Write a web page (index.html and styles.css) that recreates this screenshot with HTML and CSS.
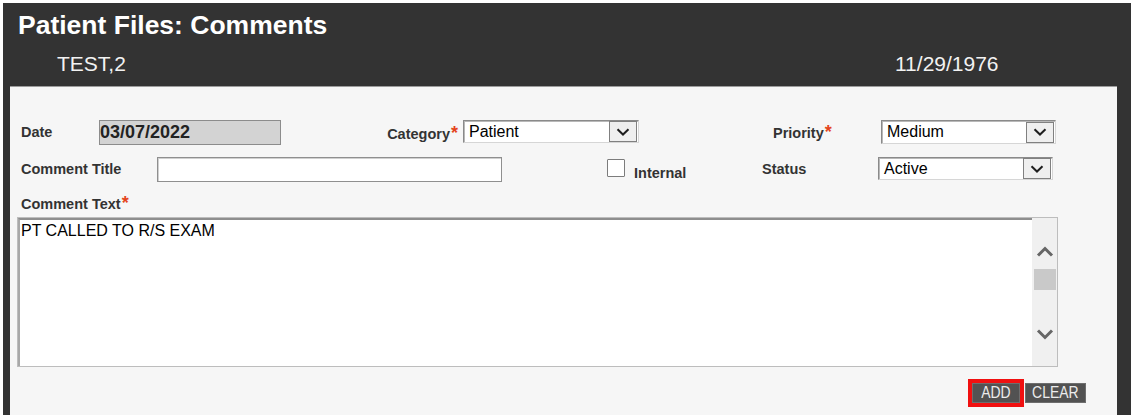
FILE: index.html
```html
<!DOCTYPE html>
<html>
<head>
<meta charset="utf-8">
<title>Patient Files: Comments</title>
<link rel="stylesheet" href="styles.css">
</head>
<body>
<div class="frame">
  <h1 class="title">Patient Files: Comments</h1>
  <div class="patient">
    <span class="patient-name">TEST,2</span>
    <span class="patient-dob">11/29/1976</span>
  </div>
  <div class="panel">
    <div class="row row-1">
      <label class="lbl lbl-date">Date</label>
      <div class="date-box">03/07/2022</div>
      <div class="lbl lbl-cat">Category<span class="req">*</span></div>
      <div class="select sel-cat">
        <span class="sel-value">Patient</span>
        <span class="sel-arrow"><svg width="14" height="8" viewBox="0 0 14 8"><path d="M1.5 1.2 L7 6.5 L12.5 1.2" fill="none" stroke="#1e1e1e" stroke-width="2"/></svg></span>
      </div>
      <div class="lbl lbl-pri">Priority<span class="req">*</span></div>
      <div class="select sel-pri">
        <span class="sel-value">Medium</span>
        <span class="sel-arrow"><svg width="14" height="8" viewBox="0 0 14 8"><path d="M1.5 1.2 L7 6.5 L12.5 1.2" fill="none" stroke="#1e1e1e" stroke-width="2"/></svg></span>
      </div>
    </div>
    <div class="row row-2">
      <label class="lbl lbl-title">Comment Title</label>
      <div class="text-input"></div>
      <div class="check-cell">
        <span class="checkbox"></span>
        <span class="lbl lbl-internal">Internal</span>
      </div>
      <div class="lbl lbl-status">Status</div>
      <div class="select sel-status">
        <span class="sel-value">Active</span>
        <span class="sel-arrow"><svg width="14" height="8" viewBox="0 0 14 8"><path d="M1.5 1.2 L7 6.5 L12.5 1.2" fill="none" stroke="#1e1e1e" stroke-width="2"/></svg></span>
      </div>
    </div>
    <div class="lbl lbl-text">Comment Text<span class="req">*</span></div>
    <div class="textbox">
      <div class="textbox-content">PT CALLED TO R/S EXAM</div>
      <div class="scrollbar">
        <svg class="sb-up" width="18" height="11" viewBox="0 0 18 11"><path d="M2 9.5 L9 2.5 L16 9.5" fill="none" stroke="#666666" stroke-width="3"/></svg>
        <div class="sb-thumb"></div>
        <svg class="sb-down" width="18" height="11" viewBox="0 0 18 11"><path d="M2 1.5 L9 8.5 L16 1.5" fill="none" stroke="#666666" stroke-width="3"/></svg>
      </div>
    </div>
    <div class="actions">
      <button class="btn btn-add"><span class="btn-text">ADD</span></button>
      <button class="btn btn-clear"><span class="btn-text">CLEAR</span></button>
    </div>
  </div>
</div>
</body>
</html>
```
FILE: styles.css
```css
html, body {
  margin: 0;
  padding: 0;
  background: #ffffff;
  font-family: "Liberation Sans", Arial, sans-serif;
  overflow: hidden;
}

.frame {
  margin: 3px 0 0 3px;
  height: 412px;
  background: #333333;
  padding: 0 14px 0 7px;
  display: flex;
  flex-direction: column;
}

.title {
  margin: 0;
  padding: 7px 0 0 8px;
  font-size: 26.5px;
  line-height: 30px;
  font-weight: bold;
  color: #ffffff;
}

.patient {
  display: flex;
  margin-top: 12px;
  margin-bottom: 10px;
  padding-left: 47px;
  font-size: 21px;
  line-height: 24px;
  color: #f2f2f2;
}

.patient-name {
  width: 838px;
}

.panel {
  flex: 1;
  background: #f6f6f6;
  border-top: 1px solid #9c9c9c;
  padding-top: 33px;
}

.row {
  display: flex;
  align-items: center;
  padding-left: 11px;
  height: 25px;
}

.row-2 {
  margin-top: 12px;
}

.lbl {
  font-size: 14.5px;
  font-weight: bold;
  color: #333333;
  line-height: 17px;
}

.req {
  color: #e4441c;
  font-size: 18px;
  font-weight: bold;
  margin-left: 1px;
}

.lbl-date {
  width: 78px;
}

.date-box {
  box-sizing: border-box;
  width: 182px;
  height: 25px;
  background: #d3d3d3;
  border: 1px solid #8c8c8c;
  font-size: 18px;
  font-weight: bold;
  color: #222222;
  line-height: 23px;
  padding-left: 0;
}

.lbl-cat {
  width: 182px;
  box-sizing: border-box;
  text-align: right;
  padding-right: 5px;
  padding-top: 2px;
}

.lbl-pri {
  width: 242px;
  box-sizing: border-box;
  padding-left: 134px;
}

.select {
  box-sizing: border-box;
  display: flex;
  align-items: center;
  height: 23px;
  background: #ffffff;
  border: 1px solid;
  border-color: #8a8a8a #d6d6d6 #d6d6d6 #8a8a8a;
  box-shadow: inset 1px 1px 0 #b8b8b8;
  font-size: 16px;
  color: #000000;
  align-self: flex-start;
}

.sel-cat {
  width: 176px;
}

.sel-pri {
  width: 175px;
  height: 24px;
}

.sel-status {
  width: 175px;
  margin-top: 0;
}

.sel-value {
  flex: 1;
  padding-left: 5px;
  line-height: 20px;
}

.sel-arrow {
  box-sizing: border-box;
  width: 28px;
  height: 21px;
  margin-right: 1px;
  border: 1px solid #808080;
  background: #efefef;
  display: flex;
  align-items: center;
  justify-content: center;
}

.lbl-title {
  width: 136px;
}

.text-input {
  box-sizing: border-box;
  width: 345px;
  height: 25px;
  background: #ffffff;
  border: 1px solid #8f8f8f;
  box-shadow: inset 1px 1px 0 #d0d0d0;
}

.check-cell {
  box-sizing: border-box;
  width: 260px;
  height: 25px;
  padding-left: 105px;
  display: flex;
  align-items: flex-start;
}

.checkbox {
  box-sizing: border-box;
  width: 18px;
  height: 18px;
  margin-top: 2px;
  background: #ffffff;
  border: 1px solid #7c7c7c;
  border-radius: 1px;
}

.lbl-internal {
  margin-left: 9px;
  margin-top: 8px;
}

.lbl-status {
  width: 116px;
}

.lbl-text {
  margin: 13px 0 0 11px;
}

.textbox {
  box-sizing: border-box;
  margin: 4px 0 0 7px;
  width: 1041px;
  height: 150px;
  border: 1px solid #bdbdbd;
  display: flex;
}

.textbox-content {
  flex: 1;
  background: #ffffff;
  border-top: 2px solid #8e8e8e;
  border-left: 2px solid #a8a8a8;
  padding: 2px 0 0 1px;
  font-size: 16px;
  line-height: 18px;
  color: #000000;
}

.scrollbar {
  width: 25px;
  background: #f0f0f0;
  display: flex;
  flex-direction: column;
  align-items: center;
}

.sb-up {
  margin-top: 28px;
}

.sb-thumb {
  width: 22px;
  height: 21px;
  margin-top: 12px;
  background: #c9c9c9;
}

.sb-down {
  margin-top: 39px;
}

.actions {
  display: flex;
  justify-content: flex-end;
  gap: 5px;
  margin-top: 16px;
  margin-right: 31px;
}

.btn {
  box-sizing: border-box;
  height: 20px;
  padding: 0;
  margin: 0;
  background: #525252;
  border: 1px solid #6e6e6e;
  color: #ececec;
  font-family: "Liberation Sans", Arial, sans-serif;
  font-size: 17px;
  line-height: 18px;
  display: flex;
  align-items: center;
  justify-content: center;
  overflow: visible;
}

.btn-text {
  display: inline-block;
  transform: scaleX(0.82);
}

.btn-add {
  width: 48px;
  outline: 4px solid #f01010;
}

.btn-clear {
  width: 61px;
}
```
